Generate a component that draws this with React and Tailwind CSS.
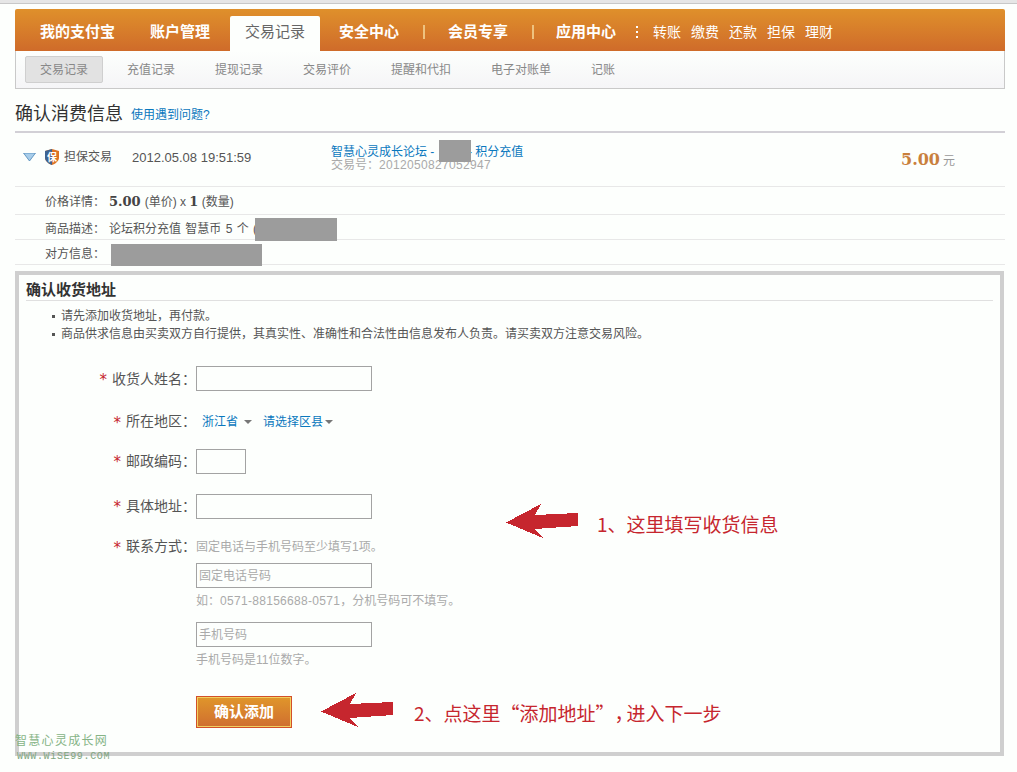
import React from 'react'

const FONT = 'font-["Liberation_Sans","Noto_Sans_CJK_SC",sans-serif]'
const PRICE = 'font-["DejaVu_Serif",serif] font-bold'

const mainNav = [
  { label: '我的支付宝', className: 'ml-[25px]' },
  { label: '账户管理', className: 'ml-[35px]' },
  { label: '交易记录', className: 'ml-[20px] w-[90px]', active: true },
  { label: '安全中心', className: 'ml-[19px]' },
]
const quickLinks = ['转账', '缴费', '还款', '担保', '理财']
const subNav = ['充值记录', '提现记录', '交易评价', '提醒和代扣', '电子对账单', '记账']

function Arrow({ className }) {
  return (
    <svg viewBox="0 0 72 35" className={className} shapeRendering="crispEdges">
      <path d="M0 18.5 L35 0 L29 11 L72 9 L72 22 L29 25 L37 34 Z" fill="#c6262e" />
    </svg>
  )
}

function ShieldIcon() {
  return (
    <svg viewBox="0 0 14 16" className="w-[14px] h-[16px]">
      <path d="M7 0 L14 2 L14 9 C14 12 10 15 7 16 C4 15 0 12 0 9 L0 2 Z" fill="#dd7426" />
      <path d="M7 0 L0 2 L0 9 C0 12 4 15 7 16 Z" fill="#3f6390" />
      <text x="7" y="12" textAnchor="middle" fontSize="10" fontWeight="700" fill="#fff" fontFamily="Noto Sans CJK SC, sans-serif">保</text>
    </svg>
  )
}

function Field({ label, className = '', labelClass = '', children }) {
  return (
    <div className={`flex items-center ${className}`}>
      <label className={`w-[177px] flex items-center justify-end text-sm text-[#555] shrink-0 ${labelClass}`}>
        <span className='font-["DejaVu_Sans",sans-serif] text-[15px] leading-none text-[#c6262e] mr-[5px] mt-[4px]'>*</span>{label}：
      </label>
      {children}
    </div>
  )
}

function TextBox({ width = 'w-[176px]', placeholder }) {
  return (
    <input
      placeholder={placeholder}
      className={`${width} h-[25px] border border-[#a3a3a3] bg-[#fdfffd] px-[2px] text-xs placeholder:text-[#aaa]`}
    />
  )
}

function InfoRow({ label, className, children }) {
  return (
    <div className={`${className} flex items-center border-b border-[#e8e8e8] pl-[30px] text-xs text-[#555]`}>
      <span className="w-[64px] shrink-0">{label}：</span>
      {children}
    </div>
  )
}

export default function App() {
  return (
    <div className={`${FONT} w-[1017px] h-[772px] bg-[#fdfffd] overflow-hidden relative`}>
      {/* top edge of the window */}
      <div className="h-[4px] bg-[#e6e6e6] border-b border-[#c8c8c8]" />

      <div className="w-[990px] ml-[15px] mt-[5px]">
        {/* Main navigation */}
        <div className="h-[42px] flex items-end bg-gradient-to-b from-[#df902b] to-[#cf6b2a] rounded-t-[2px] text-[15px]">
          {mainNav.map(item => (
            <a
              key={item.label}
              className={`${item.className} h-[35px] pb-[3px] flex items-center justify-center font-bold ${
                item.active ? 'bg-[#fdfffd] text-[#666] rounded-t-[2px] font-normal' : 'text-white'
              }`}
            >
              {item.label}
            </a>
          ))}
          <div className="h-[35px] pb-[3px] flex items-center text-white">
            <span className="w-[2px] h-[14px] bg-[#eec27f] ml-[24px] mr-[23px]" />
            <span className="font-bold">会员专享</span>
            <span className="w-[2px] h-[14px] bg-[#eec27f] ml-[24px] mr-[22px]" />
            <span className="font-bold">应用中心</span>
            <span className="ml-[20px] mr-[15px] flex flex-col gap-[3px]">
              <i className="block w-[2px] h-[2px] bg-white" />
              <i className="block w-[2px] h-[2px] bg-white" />
              <i className="block w-[2px] h-[2px] bg-white" />
            </span>
            {quickLinks.map(text => (
              <span key={text} className="w-[38px] text-sm font-normal">{text}</span>
            ))}
          </div>
        </div>

        {/* Secondary navigation */}
        <div className="h-[38px] flex items-center pl-[9px] gap-[40px] border-x border-b border-[#c9c9c9] bg-gradient-to-b from-[#fdfffd] to-[#f5f5f7] text-xs text-[#888]">
          <a className="w-[78px] h-[27px] -mr-[16px] flex items-center justify-center bg-[#e2e2e2] border border-[#cfcfcf] rounded-[2px]">交易记录</a>
          {subNav.map(label => (
            <a key={label} className="pt-[1px]">{label}</a>
          ))}
        </div>

        {/* Page title */}
        <div className="h-[44px] flex items-center border-b-2 border-[#d2d0d6]">
          <h1 className="text-lg font-normal text-[#333] mt-[8px]">确认消费信息</h1>
          <a className="ml-[8px] mt-[9px] text-xs text-[#0a78bd]">使用遇到问题?</a>
        </div>

        {/* Transaction summary */}
        <div className="h-[54px] pb-[6px] flex items-center border-b border-[#e8e8e8] relative text-xs text-[#555]">
          <svg viewBox="0 0 12 8" className="w-[13px] h-[8px] ml-[8px]">
            <path d="M0 0 H12 L6 8 Z" fill="#a8cdea" stroke="#4a86b8" strokeWidth="0.8" />
          </svg>
          <span className="ml-[9px]"><ShieldIcon /></span>
          <span className="ml-[1px] w-[72px] pl-[4px]">担保交易</span>
          <span className="w-[199px] mt-[2px] text-[13px]">2012.05.08 19:51:59</span>
          <div className="mt-[4px] leading-[13px]">
            <a className="block text-[#0a78bd]">智慧心灵成长论坛 - <span className="inline-block w-[27px]" /> - 积分充值</a>
            <span className="block text-[#aaa]">交易号：<span className="tracking-[0.33px]">2012050827052947</span></span>
          </div>
          <div className="absolute left-[424px] top-[7px] w-[32px] h-[22px] bg-[#9c9c9c]" />
          <div className="absolute right-[50px] top-[15px] flex items-baseline gap-[3px]">
            <span className={`${PRICE} text-base text-[#c9803c]`}>5.00</span>
            <span className="text-xs text-[#999]">元</span>
          </div>
        </div>

        <InfoRow label="价格详情" className="h-[28px] pt-[2px]">
          <span className={`${PRICE} text-[13px] text-[#444] mr-[4px]`}>5.00</span>
          (单价) x&nbsp;
          <span className={`${PRICE} text-[13px] text-[#444]`}>1</span>
          &nbsp;(数量)
        </InfoRow>
        <InfoRow label="商品描述" className="h-[25px] pt-[3px] relative">
          <span className="[word-spacing:1px]">论坛积分充值 智慧币 5 个 (</span>
          <div className="absolute left-[240px] top-[3px] w-[82px] h-[23px] bg-[#9c9c9c]" />
        </InfoRow>
        <InfoRow label="对方信息" className="h-[25px] pt-[3px] relative">
          <div className="absolute left-[96px] top-[4px] w-[151px] h-[22px] bg-[#9c9c9c]" />
        </InfoRow>

        {/* Address form */}
        <div className="mt-[6px] w-[989px] h-[485px] border-[4px] border-[#cfcfcf] relative">
          <div className="mx-[7px] h-[26px] flex items-end pb-[3px] border-b border-[#e0e0e0]">
            <h2 className="text-[15px] font-bold text-[#333] leading-none">确认收货地址</h2>
          </div>
          <ul className="mt-[6px] ml-[33px] text-xs text-[#555] leading-[18px]">
            <li className="flex items-center"><i className="w-[3px] h-[3px] bg-[#555] mr-[6px]" />请先添加收货地址，再付款。</li>
            <li className="flex items-center"><i className="w-[3px] h-[3px] bg-[#555] mr-[6px]" />商品供求信息由买卖双方自行提供，其真实性、准确性和合法性由信息发布人负责。请买卖双方注意交易风险。</li>
          </ul>

          <Field label="收货人姓名" className="mt-[23px] h-[25px]"><TextBox /></Field>
          <Field label="所在地区" labelClass="-mt-[2px]" className="mt-[19px] h-[24px]">
            <a className="ml-[6px] text-xs text-[#0a78bd]">浙江省</a>
            <i className="ml-[6px] w-0 h-0 border-x-[4px] border-t-[4px] border-x-transparent border-t-[#777]" />
            <a className="ml-[11px] text-xs text-[#0a78bd]">请选择区县</a>
            <i className="ml-[2px] w-0 h-0 border-x-[4px] border-t-[4px] border-x-transparent border-t-[#777]" />
          </Field>
          <Field label="邮政编码" labelClass="-mt-[2px]" className="mt-[15px] h-[25px]"><TextBox width="w-[50px]" /></Field>
          <Field label="具体地址" labelClass="-mt-[2px]" className="mt-[20px] h-[25px]"><TextBox /></Field>
          <Field label="联系方式" labelClass="-mt-[2px]" className="mt-[18px] h-[20px]">
            <span className="text-xs text-[#aaa]">固定电话与手机号码至少填写1项。</span>
          </Field>

          <div className="ml-[177px] mt-[6px] flex flex-col items-start">
            <TextBox placeholder="固定电话号码" />
            <p className="mt-[5px] h-[29px] text-xs leading-[16px] text-[#aaa]">如：<span className="tracking-[0.3px]">0571-88156688-0571</span>，分机号码可不填写。</p>
            <TextBox placeholder="手机号码" />
            <p className="mt-[5px] text-xs leading-[16px] text-[#aaa]">手机号码是11位数字。</p>
            <button className="mt-[28px] w-[96px] h-[32px] border border-[#d3502a] bg-gradient-to-b from-[#e0962a] to-[#cf6e2f] shadow-[inset_0_0_0_1px_#f0d060] text-[15px] font-bold text-white">
              确认添加
            </button>
          </div>

          {/* Callouts beside the form */}
          <Arrow className="absolute left-[487px] top-[229px] w-[72px] h-[35px]" />
          <p className='absolute left-[578px] top-[237px] font-["Noto_Sans_CJK_SC",sans-serif] text-[19px] leading-[24px] text-[#c6262e]' lang="zh-CN">1、这里填写收货信息</p>
          <Arrow className="absolute left-[302px] top-[418px] w-[72px] h-[35px]" />
          <p className='absolute left-[395px] top-[426px] font-["Noto_Sans_CJK_SC",sans-serif] text-[19px] leading-[24px] text-[#c6262e] whitespace-nowrap [text-spacing-trim:space-all]' lang="zh-CN">2、点这里“添加地址”<span className="tracking-[-7px]">，</span>进入下一步</p>
        </div>
      </div>

      {/* Site stamp */}
      <div className="absolute left-[15px] top-[733px] text-[#86b486] leading-none">
        <div className="text-xs tracking-[1.3px]">智慧心灵成长网</div>
        <div className='font-["Liberation_Mono",monospace] text-[10px] ml-[2px] mt-[3px] tracking-[0.65px] text-[#7fa67f]'>WWW.WiSE99.COM</div>
      </div>
    </div>
  )
}
